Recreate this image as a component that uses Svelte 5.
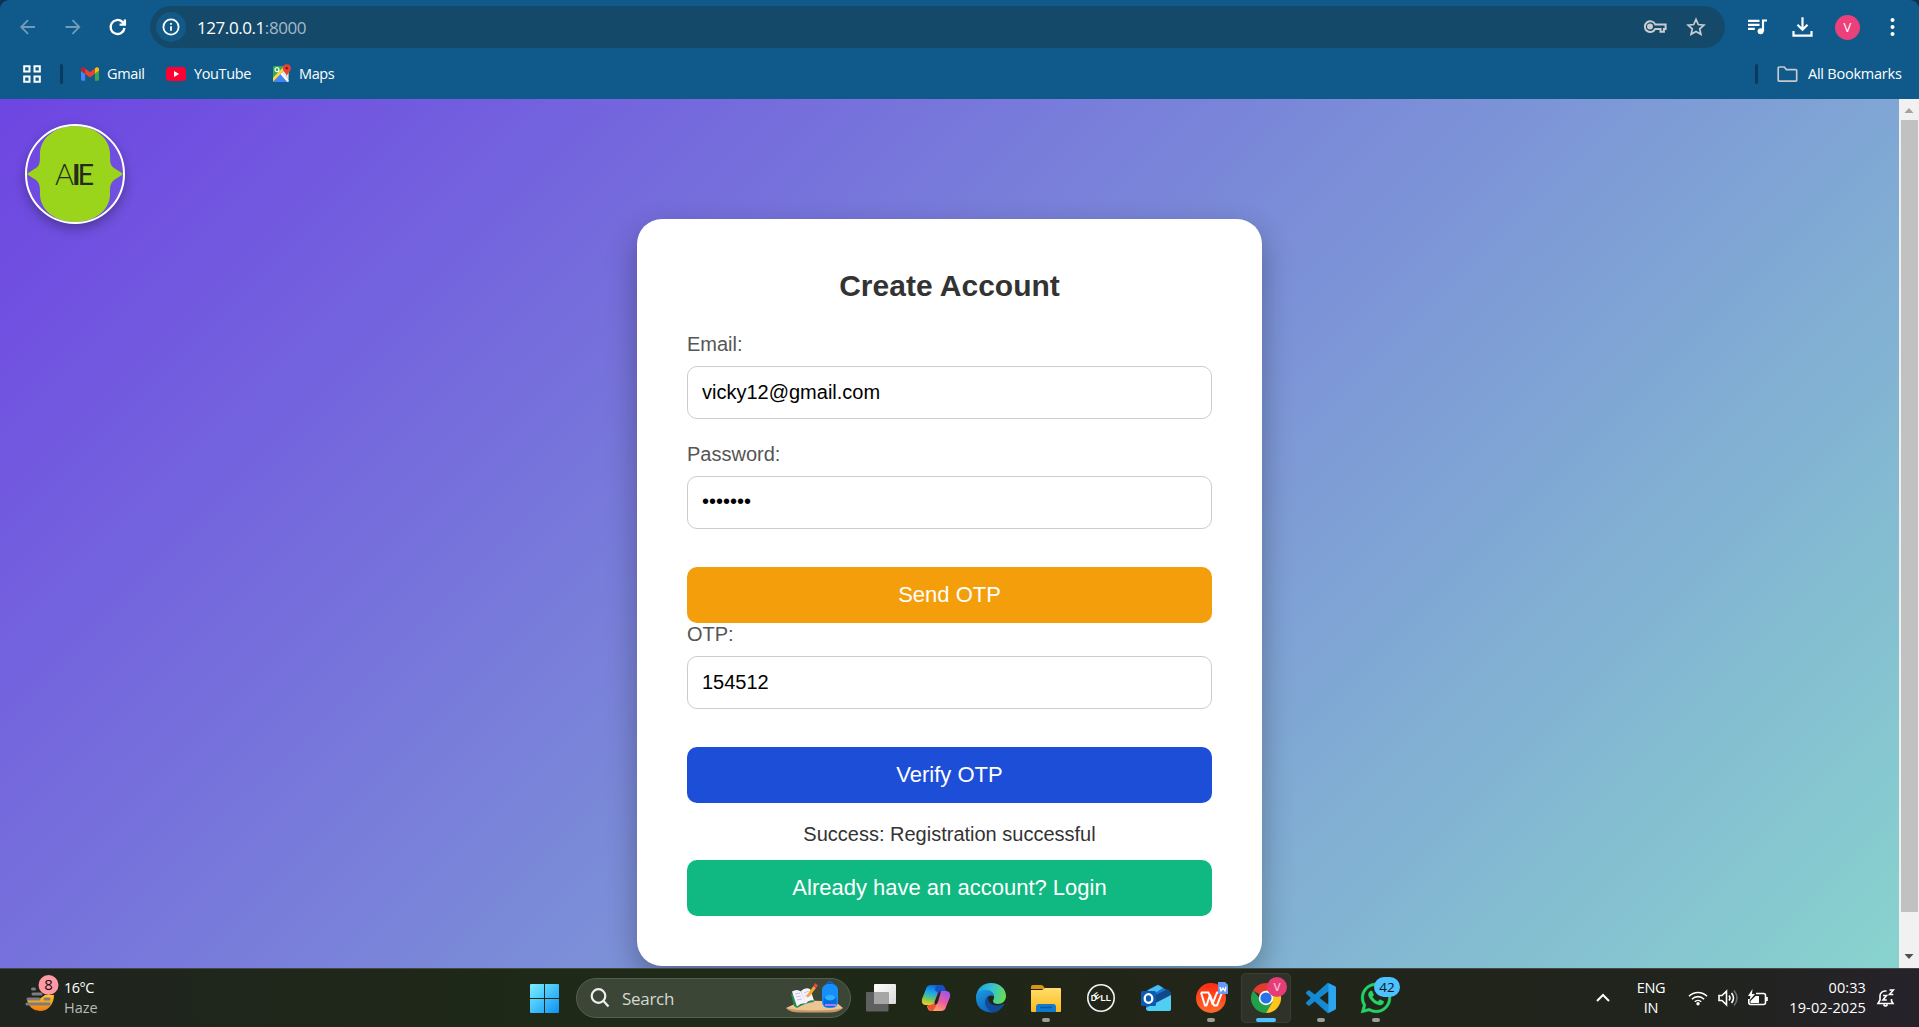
<script>
  let email = $state('vicky12@gmail.com');
  let password = $state('secret7');
  let otp = $state('154512');
</script>

<div class="screen">
  <header class="browser">
    <div class="toolbar">
      <div class="nav">
        <svg class="dim" viewBox="0 0 20 20"><path d="M17 10H3.5M10 3.2 3.2 10l6.8 6.8" /></svg>
        <svg class="dim" viewBox="0 0 20 20"><path d="M2.500 10H16M9.500 3.200l6.800 6.800-6.800 6.800" /></svg>
        <svg class="reload" viewBox="0 0 20 20"><path d="M16.500 11A7 7 0 1 1 14.400 4.900L16.600 7.200M16.900 2.400v5.300H11.600" /></svg>
      </div>
      <div class="omnibox">
        <span class="info">
          <svg viewBox="0 0 18 18"><circle cx="9" cy="9" r="7.6" /><path d="M9 8.2v4.6M9 5v1.8" /></svg>
        </span>
        <span class="url">127.0.0.1<span>:8000</span></span>
        <svg class="key" viewBox="0 0 24 16"><path d="M12.2 5.4h10.4v4.5h-1.7v2.8h-3.4V9.9h-5.3a5.4 5.4 0 1 1 0-4.5z" /><circle cx="7" cy="7.6" r="2" /></svg>
        <svg class="star" viewBox="0 0 20 20"><path d="m10 2.4 2.3 5.1 5.6.6-4.2 3.7 1.2 5.5L10 14.5l-4.9 2.8 1.2-5.5-4.2-3.7 5.6-.6z" /></svg>
      </div>
      <div class="actions">
        <svg viewBox="1 0 24 24"><path d="M3 5.8h11.500M3 9.800h11.500M3 13.800h6.800M18 16.500V5.500h4" /><circle cx="15.600" cy="16.300" r="3" fill="#fff" stroke="none" /></svg>
        <svg viewBox="1 0 24 24"><path d="M12.5 2.3v12M7.5 9.800l5 5 5-5M3.500 16v4.700h18V16" /></svg>
        <span class="avatar">V</span>
        <svg viewBox="0.500 0 24 24"><g fill="#fff" stroke="none"><circle cx="12" cy="5" r="2" /><circle cx="12" cy="12" r="2" /><circle cx="12" cy="19" r="2" /></g></svg>
      </div>
    </div>
    <div class="bookmarks">
      <svg class="grid" viewBox="0 0 18 18"><path d="M1.2 1.2h5.3v5.3H1.2zM11.5 1.2h5.3v5.3h-5.3zM1.2 11.5h5.3v5.3H1.2zM11.5 11.5h5.3v5.3h-5.3z" /></svg>
      <i class="sep"></i>
      <a class="bm gmail" href="#gmail">
        <svg viewBox="52 42 88 66"><path fill="#4285f4" d="M58 108h14V74L52 59v43c0 3.32 2.69 6 6 6" /><path fill="#34a853" d="M120 108h14c3.32 0 6-2.69 6-6V59l-20 15" /><path fill="#fbbc04" d="M120 48v26l20-15v-8c0-7.42-8.47-11.65-14.4-7.2" /><path fill="#ea4335" d="M72 74V48l24 18 24-18v26L96 92" /><path fill="#c5221f" d="M52 51v8l20 15V48l-5.6-4.2c-5.94-4.45-14.4-.22-14.4 7.2" /></svg>
        <span>Gmail</span>
      </a>
      <a class="bm youtube" href="#youtube">
        <svg viewBox="0 0 20 14"><rect width="20" height="14" rx="3.2" fill="#ff0033" /><path d="M8 4v6l5.2-3z" fill="#fff" /></svg>
        <span>YouTube</span>
      </a>
      <a class="bm maps" href="#maps">
        <svg viewBox="0 0 18 19">
          <rect y="2" width="15.5" height="16" rx="1.2" fill="#34a853" />
          <path d="M0 15 8 7l7.5 9.5V18H1z" fill="#4285f4" />
          <path d="m9 9 6.5 6.5V7L12 5z" fill="#e4e6e8" />
          <path d="M0 13.5 10.5 3l2 2L0 17.7z" fill="#fcd34a" />
          <path d="m7.5 10.2 1.7-1.6 6.5 7.4-.4 2h-1z" fill="#fff" />
          <circle cx="4" cy="5.7" r="2" fill="none" stroke="#fff" stroke-width="1.2" />
          <path d="M13.8 12.5c0-3-4-4.500-4-8.200a4 4 0 0 1 8 0c0 3.700-4 5.200-4 8.200" fill="#ea4335" /><circle cx="13.800" cy="4.200" r="1.400" fill="#8d1f17" />
        </svg>
        <span>Maps</span>
      </a>
      <i class="sep last"></i>
      <a class="bm all" href="#all">
        <svg viewBox="0 0 21 16"><path d="M1.200 14.300V2a1 1 0 0 1 1-1h5l2.200 2.600h9.300a1 1 0 0 1 1 1v9.700a.8.800 0 0 1-.8.800H2a.8.800 0 0 1-.8-.8z" fill="none" stroke="#c7c9cb" stroke-width="1.700" /></svg>
        <span>All Bookmarks</span>
      </a>
    </div>
  </header>

  <div class="viewport">
    <main class="page">
      <svg class="logo" viewBox="0 0 100 100">
        <path d="M50 2c20 0 34.500 12 35 27 .2 8-.5 12 4 15 4 2.500 6.500 4 9 6-2.500 2-5 3.500-9 6-4.500 4-4 8-4 15-.5 15-15 27-35 27S15.500 86 15 71c0-7 .5-11-4-15-4-2.500-6.500-4-9-6 2.500-2 5-3.500 9-6 4.500-3 3.800-7 4-15C15.500 14 30 2 50 2" fill="#9ad51b" />
        <circle cx="50" cy="50" r="49" fill="none" stroke="#fff" stroke-width="2" />
        <text y="61" fill="#252b20"><tspan x="30" class="thin">A</tspan><tspan x="47" class="thick">I</tspan><tspan x="52.500" class="mid">E</tspan></text>
      </svg>
      <form class="card" onsubmit={(e) => e.preventDefault()}>
        <h2>Create Account</h2>
        <label for="email">Email:</label>
        <input id="email" type="text" bind:value={email} />
        <label class="spaced" for="password">Password:</label>
        <input id="password" type="password" bind:value={password} />
        <button class="send" type="button">Send OTP</button>
        <label for="otp">OTP:</label>
        <input id="otp" type="text" bind:value={otp} />
        <button class="verify" type="submit">Verify OTP</button>
        <p>Success: Registration successful</p>
        <button class="login" type="button">Already have an account? Login</button>
      </form>
    </main>
    <div class="scrollbar">
      <svg viewBox="0 0 20 21"><path d="m5.500 14 4.500-5 4.500 5z" fill="#a3a3a3" /></svg>
      <div class="thumb"></div>
      <svg class="down" viewBox="0 0 20 21"><path d="m5.500 7 4.500 5 4.500-5z" fill="#505050" /></svg>
    </div>
  </div>

  <footer class="taskbar">
    <div class="weather">
      <svg viewBox="0 0 34 38">
        <defs><linearGradient id="sun" x2="0" y2="1"><stop offset="0" stop-color="#ffc328" /><stop offset="1" stop-color="#f07d12" /></linearGradient></defs>
        <path d="M2 25h11l7-5h9q0 7-4 11.500-4 4.500-10 4.500-10 0-13-11" fill="url(#sun)" />
        <path d="M7.500 14h2M8 19h8M3 24h11M20 24h4M2 29h22" stroke="#7c7d80" stroke-width="3" stroke-linecap="round" />
        <circle cx="23.500" cy="10" r="10" fill="#ff99a4" /><text x="23.500" y="15.300" text-anchor="middle" font-size="15" fill="#111">8</text>
      </svg>
      <div class="temp"><span>16°C</span><span class="haze">Haze</span></div>
    </div>

    <div class="center">
      <svg class="start" viewBox="0 0 29 29">
        <defs><linearGradient id="win" x2="1" y2="1"><stop offset="0" stop-color="#7deeff" /><stop offset=".5" stop-color="#43c1fb" /><stop offset="1" stop-color="#0c91f4" /></linearGradient></defs>
        <path d="M0 1q0-1 1-1h13v14H0zM15 0h13q1 0 1 1v13H15zM0 15h14v14H1q-1 0-1-1zM15 15h14v13q0 1-1 1H15z" fill="url(#win)" />
      </svg>
      <div class="search">
        <svg class="lens" viewBox="0 0 20 20"><circle cx="8.500" cy="8" r="6.800" /><path d="m13.500 13 5 5.500" /></svg>
        <span>Search</span>
        <svg class="school" viewBox="0 0 58 34">
          <path d="M1 27 14 21q20-3 38 1l6 5q-5 4-14 4H15q-10 0-14-4" fill="#ecc594" />
          <path d="M1 27q8 2.500 28 2.500T58 27q-5 4.500-14 4.500H15Q5 31.500 1 27" fill="#c99564" />
          <path d="m6 13 20-5 3 13q-9 1-17 6l-3-2z" fill="#258d46" />
          <path d="M7 10.500q5-3 9 0l5 12q-5-1-9 3zM16 10q4-4 9-2l4 11.500q-5-1-8 3z" fill="#f7f2ff" />
          <path d="m10 13 5-1M11 16l5-1M12 19l5-1M19 12l5-2M20 15l5-2" stroke="#cdbfe6" />
          <path d="m22 14 6.500-9 2.500 2-6.500 8.500-3 1z" fill="#f5a52b" /><path d="m28.500 5 1.500-3 3 2.500-2 2.500z" fill="#ef4055" />
          <path d="M41.500 4q3.500-6 7 0" fill="none" stroke="#1261cd" stroke-width="1.800" />
          <rect x="37" y="3" width="16" height="24" rx="6" fill="#1590fb" /><rect x="38.500" y="15" width="13" height="11" rx="4" fill="#0868e0" /><path d="M39.500 17q5.500 5 11 0-1-3-5.500-3t-5.500 3" fill="#2fb0ff" /><path d="M40 24h11" stroke="#a77cf5" stroke-width="2" />
        </svg>
      </div>
      <div class="apps">
        <svg viewBox="0 0 50 50">
          <defs><linearGradient id="tv" x2="1" y2="1"><stop offset="0" stop-color="#fff" /><stop offset="1" stop-color="#d9d9d9" /></linearGradient></defs>
          <rect x="18" y="11" width="22" height="20" rx="1" fill="url(#tv)" /><rect x="10" y="19" width="22.500" height="19.500" rx="1" fill="#606060" /><path d="M18 19h14.500v12H18z" fill="#a6a6a6" />
        </svg>
        <svg viewBox="0 0 50 50">
          <defs>
            <linearGradient id="cpA" x1=".6" x2=".3" y2="1"><stop offset="0" stop-color="#155bd7" /><stop offset=".4" stop-color="#17a8ef" /><stop offset=".7" stop-color="#64c56a" /><stop offset="1" stop-color="#f4cb20" /></linearGradient>
            <linearGradient id="cpB" x1=".8" x2=".3" y2="1"><stop offset="0" stop-color="#9c55f0" /><stop offset=".5" stop-color="#ec5c9d" /><stop offset="1" stop-color="#ffab5e" /></linearGradient>
          </defs>
          <path d="M20 12h10q3 0 4 4l1 2h-4q-3 0-4 3l-3 9q-1 2-4 2h-5q-5 0-4-6l4-10q1-4 5-4" fill="url(#cpA)" />
          <path d="M27 12h4q3 1 3 6h-3q-3 0-4 2l-3-3q0-4 3-5" fill="#1550c4" />
          <path d="M30 38H20q-3 0-4-5l3-.5q3 0 4-3l3-9q1-2.500 5-2.500h4q5 0 4 6l-4 10q-1 4-5 4" fill="url(#cpB)" />
          <path d="M22 38h-2q-3-1-3.500-6h3q3 0 3.500-2l2 3z" fill="#f04f38" /><path d="M23.500 29 27 20q1-2 3-2l-3 11q-1 3-3 3z" fill="#1f261b" />
        </svg>
        <svg viewBox="0 0 50 50">
          <defs>
            <linearGradient id="edA" x1="0" x2="1" y1=".3" y2=".5"><stop offset="0" stop-color="#1b9de0" /><stop offset=".5" stop-color="#35c2d0" /><stop offset="1" stop-color="#65df55" /></linearGradient>
            <linearGradient id="edB" x2=".6" y2="1"><stop offset="0" stop-color="#1d9be2" /><stop offset="1" stop-color="#0f62bd" /></linearGradient>
          </defs>
          <path d="M10 24C11 15 17 10 25 10c9 0 15 6 15 13 0 5-4 8-8 8-3 0-5-1-5-3 0-1 1-1 1-4 0-4-4-6-8-6-6 0-10 4-10 6" fill="url(#edA)" />
          <path d="M10 24c0-4 4-7 10-7 5 0 8 3 8 6-5-2-8 2-8 6 0 6 5 11 10 10-3 1-20 2-20-15" fill="url(#edB)" />
          <path d="M24 22c-3 1-5 4-5 7 0 6 6 11 11 10 3-1 6-4 8-7 1-1 0-1.500-1-1-2 1-4 1.500-6 1.500-6 0-9-4-9-7 0-2 1-3 2-3.500" fill="#114a96" />
        </svg>
        <svg viewBox="0 0 50 50">
          <defs><linearGradient id="fold" x2="0" y2="1"><stop offset="0" stop-color="#ffde6b" /><stop offset="1" stop-color="#fcb91d" /></linearGradient></defs>
          <path d="M10 14q0-2 2-2h8q2 0 3 2l1 2h-14z" fill="#dc9414" /><path d="M10 17h11l3-2h15q1 0 1 1v22q0 1-1 1H11q-1 0-1-1z" fill="url(#fold)" />
          <path d="M15 39v-5q0-3 3-3h14q3 0 3 3v5z" fill="#0f79cf" /><path d="M19 34.500h12" stroke="#07569e" stroke-width="1.500" />
          <rect x="21" y="45" width="8" height="4" rx="2" fill="#9b9d96" />
        </svg>
        <svg viewBox="0 0 50 50">
          <circle cx="25" cy="25" r="13.200" fill="none" stroke="#f4f4f4" stroke-width="1.600" />
          <text class="dell" y="28.200"><tspan x="14.800">D</tspan><tspan x="24.500">L</tspan><tspan x="29.700">L</tspan></text>
          <text class="dell" transform="translate(20.600 26.800) rotate(-38)">E</text>
        </svg>
        <svg viewBox="0 0 50 50">
          <path d="m15 18 11-6q1-.5 2 0l12 8v16q0 2-2 2H18q-3 0-3-3z" fill="#1477cb" /><path d="m17 17 10-5 5 3-13 8z" fill="#4abdf0" /><path d="m20 24 17-8 3 4v5L25 35z" fill="#13488f" /><path d="m15 35 25-13v14q0 2-2 2H18q-3 0-3-3" fill="#50cff5" />
          <rect x="10" y="18" width="15" height="15" rx="1.500" fill="#0c5ab3" /><ellipse cx="17.500" cy="25.500" rx="3.800" ry="4.400" fill="none" stroke="#fff" stroke-width="2.300" />
        </svg>
        <svg viewBox="0 0 50 50">
          <defs><linearGradient id="wps" x2="0" y2="1"><stop offset="0" stop-color="#ff2a13" /><stop offset="1" stop-color="#ff6a2a" /></linearGradient></defs>
          <circle cx="25" cy="25" r="15" fill="url(#wps)" /><path d="M15 19.500h7.500l4 11.500 4.500-11.500h5L31 32.500h-3L24 22l-3.500 10.500h-1.500L15 19.500" fill="none" stroke="#fff" stroke-width="2" stroke-linejoin="round" />
          <path d="M32 9h7l3 3v9H32z" fill="#6699f8" /><path d="m34 14 1 4 2-3 2 3 1-4" fill="none" stroke="#fff" stroke-width="1.300" />
          <rect x="21" y="45" width="8" height="4" rx="2" fill="#9b9d96" />
        </svg>
        <svg class="active" viewBox="0 0 50 50">
          <path d="M25 25 12 17.500A15 15 0 0 1 38 17.500z" fill="#e33b2e" /><path d="M25 25h-6.500L12 17.500a15 15 0 0 0 13 22.500l6.500-11z" fill="#22a14a" /><path d="M25 17.500h13A15 15 0 0 1 25 40l6.500-11z" fill="#fdc61a" />
          <circle cx="25" cy="25" r="7.200" fill="#fff" /><circle cx="25" cy="25" r="5.600" fill="#2872e8" />
          <circle cx="36" cy="14" r="10" fill="#e63d78" /><text x="36" y="18" text-anchor="middle" font-size="11.500" fill="#f6bcd2" font-weight="600">V</text>
          <rect x="15" y="45" width="20" height="4" rx="2" fill="#4cc2ff" />
        </svg>
        <svg viewBox="0 0 50 50">
          <g transform="translate(10 10) scale(1.250)">
            <path fill="#1589d2" d="M23.150 2.587L18.210.21a1.494 1.494 0 0 0-1.705.29l-9.460 8.630-4.120-3.128a.999.999 0 0 0-1.276.057L.327 7.261A1 1 0 0 0 .326 8.740L3.899 12 .326 15.260a1 1 0 0 0 .001 1.479L1.650 17.940a.999.999 0 0 0 1.276.057l4.120-3.128 9.460 8.630a1.492 1.492 0 0 0 1.704.29l4.942-2.377A1.500 1.500 0 0 0 24 20.060V3.939a1.500 1.500 0 0 0-.85-1.352zm-5.146 14.861L10.826 12l7.178-5.448v10.896z" />
            <path fill="#2aa5ef" d="M18 .1 23.150 2.587A1.500 1.500 0 0 1 24 3.939V20.060a1.500 1.500 0 0 1-.85 1.352L18 23.900z" />
          </g>
          <rect x="21" y="45" width="8" height="4" rx="2" fill="#9b9d96" />
        </svg>
        <svg viewBox="0 0 50 50">
          <path transform="translate(10 10) scale(1.250)" fill="#25d366" stroke="#25d366" stroke-width=".4" d="M17.472 14.382c-.297-.149-1.758-.867-2.030-.967-.273-.099-.471-.148-.67.150-.197.297-.767.966-.94 1.164-.173.199-.347.223-.644.075-.297-.150-1.255-.463-2.390-1.475-.883-.788-1.480-1.761-1.653-2.059-.173-.297-.018-.458.130-.606.134-.133.298-.347.446-.520.149-.174.198-.298.298-.497.099-.198.050-.371-.025-.520-.075-.149-.669-1.612-.916-2.207-.242-.579-.487-.5-.669-.510-.173-.008-.371-.010-.570-.010-.198 0-.520.074-.792.372-.272.297-1.040 1.016-1.040 2.479 0 1.462 1.065 2.875 1.213 3.074.149.198 2.096 3.200 5.077 4.487.709.306 1.262.489 1.694.625.712.227 1.360.195 1.871.118.571-.085 1.758-.719 2.006-1.413.248-.694.248-1.289.173-1.413-.074-.124-.272-.198-.570-.347m-5.421 7.403h-.004a9.870 9.870 0 0 1-5.031-1.378l-.361-.214-3.741.982.998-3.648-.235-.374a9.860 9.860 0 0 1-1.510-5.260c.001-5.450 4.436-9.884 9.888-9.884 2.640 0 5.122 1.030 6.988 2.898a9.825 9.825 0 0 1 2.893 6.994c-.003 5.450-4.437 9.884-9.885 9.884m8.413-18.297A11.815 11.815 0 0 0 12.050 0C5.495 0 .160 5.335.157 11.892c0 2.096.547 4.142 1.588 5.945L.057 24l6.305-1.654a11.882 11.882 0 0 0 5.683 1.448h.005c6.554 0 11.890-5.335 11.893-11.893a11.821 11.821 0 0 0-3.480-8.413z" />
          <rect x="23" y="4" width="26" height="20" rx="10" fill="#4cc2ff" /><text x="36" y="19" text-anchor="middle" font-size="13.500" fill="#0b1520">42</text>
          <rect x="21" y="45" width="8" height="4" rx="2" fill="#9b9d96" />
        </svg>
      </div>
    </div>

    <div class="tray">
      <svg class="chevron" viewBox="0 0 14 10"><path d="M1 8l6-6 6 6" /></svg>
      <div class="lang"><span>ENG</span><span>IN</span></div>
      <svg class="wifi" viewBox="0 0 20 16"><path d="M1 6.200a12.700 12.700 0 0 1 18 0M3.900 9.200a8.600 8.600 0 0 1 12.200 0M6.800 11.800a4.600 4.600 0 0 1 6.400 0" /><circle cx="10" cy="13.800" r="1.700" fill="#fff" stroke="none" /></svg>
      <svg class="sound" viewBox="0 0 20 18"><path d="M1 6.500h3l4.500-4.300v13.600L4 11.500H1zM11 6.500q2 2.500 0 5M13.500 4q4 5 0 10" /><path d="M16 1.500q6 7.500 0 15" opacity=".35" /></svg>
      <svg class="battery" viewBox="0 0 20 17"><path d="M8 3.500h7.500a2 2 0 0 1 2 2v7a2 2 0 0 1-2 2H2.800a2 2 0 0 1-2-2V9" /><path d="M7.500 6H11v7H2.500v-2zM4.500-1 0 6h2.500l-1 4.500L7 4H4zM18 7h1.800v4H18z" fill="#fff" stroke="none" /></svg>
      <div class="clock"><span>00:33</span><span>19-02-2025</span></div>
      <svg class="bell" viewBox="0 0 18 20"><path d="M9.500 3H8a5 5 0 0 0-5 5V12l-2 3.500h15L14.500 13v-2M6.500 16.500q2 3 4 0M6 7.500h3.500l-3.500 4.500h3.800M12.500 2h3.800l-3.800 4.500h3.800" /></svg>
    </div>
  </footer>
</div>

<style>
  :global(body) { background: #0a3552; overflow: hidden; }
  .screen { width: 1919px; height: 1027px; display: flex; flex-direction: column; font-family: "Open Sans", "Noto Sans", sans-serif; color: #fff; }
  svg { display: block; flex: none; overflow: visible; }

  .browser { height: 99px; flex: none; background: #105a8b; border-radius: 9px 9px 0 0; }
  .toolbar { height: 42px; padding: 6px 4px 0 5px; display: flex; align-items: center; }
  .toolbar svg { fill: none; stroke: #fff; stroke-width: 2; }
  .nav { display: flex; width: 135px; margin-right: 10px; }
  .nav svg { width: 20px; height: 20px; margin: 0 12.5px; }
  .nav svg.dim { stroke: #6f9cb9; stroke-width: 1.8; }
  .nav svg.reload { stroke-width: 2.3; }
  .omnibox { width: 1575px; height: 42px; box-sizing: border-box; border-radius: 21px; background: #14496a; display: flex; align-items: center; padding: 0 19px 0 6px; }
  .info { width: 30px; height: 30px; border-radius: 50%; background: #115a88; display: grid; place-items: center; margin-right: 11px; }
  .info svg { width: 18px; height: 18px; stroke-width: 1.8; }
  .url { flex: 1; font-size: 17px; letter-spacing: -0.43px; }
  .url span { color: #a3b9c8; }
  .toolbar .key { width: 24px; height: 16px; stroke: #c9ccce; margin-right: 19px; }
  .toolbar .key circle { fill: #c9ccce; }
  .toolbar .star { width: 20px; height: 20px; stroke: #c9ccce; stroke-width: 1.7; }
  .actions { display: flex; align-items: center; margin-left: 10px; }
  .actions svg { width: 24px; height: 24px; margin: 0 10.5px; stroke-width: 2.2; }
  .avatar { width: 25px; height: 25px; margin: 0 10px; border-radius: 50%; background: #ec407a; font-size: 13px; line-height: 25px; text-align: center; }

  .bookmarks { height: 51px; display: flex; align-items: center; padding: 0 17px 0 23px; font-size: 14.5px; }
  .grid { width: 18px; height: 18px; fill: none; stroke: #fff; stroke-width: 2; }
  .sep { width: 3px; height: 20px; border-radius: 2px; background: #0a3b5e; margin: 0 18px 0 19px; }
  .bm { display: flex; align-items: center; color: #fff; text-decoration: none; white-space: nowrap; }
  .gmail { width: 85px; }
  .gmail svg { width: 18px; height: 14px; margin-right: 8px; }
  .youtube { width: 107px; }
  .youtube svg { width: 20px; height: 14px; margin-right: 8px; }
  .maps svg { width: 18px; height: 19px; margin-right: 8px; }
  .sep.last { margin-left: auto; margin-right: 19px; }
  .all svg { width: 21px; height: 16px; margin-right: 10px; }
  .bm span { letter-spacing: -0.38px; }
  .all span { letter-spacing: -0.23px; width: 94px; }

  .viewport { height: 869px; flex: none; display: flex; overflow: hidden; }
  .page { width: 1899px; position: relative; background: linear-gradient(135deg, #6e45e2, #88d3ce); display: flex; justify-content: center; align-items: flex-start; padding-top: 120px; box-sizing: border-box; font-family: "Liberation Sans", Arial, sans-serif; }
  .logo { position: absolute; left: 25px; top: 25px; width: 100px; height: 100px; border-radius: 50%; box-shadow: 0 5px 12px rgba(0, 0, 0, 0.3); }
  .logo text { font-family: Lato, sans-serif; font-size: 29px; }
  .thin { font-weight: 300; }
  .mid { font-weight: 400; }
  .thick { font-weight: 700; }
  .card { width: 625px; height: 747px; box-sizing: border-box; padding: 50px; border-radius: 25px; background: #fff; box-shadow: 0 12px 31px rgba(0, 0, 0, 0.3); font-size: 20px; color: #333; }
  h2 { margin: 0 0 30px; height: 34px; line-height: 34px; font-size: 30px; text-align: center; }
  label { display: block; height: 23px; line-height: 23px; margin-bottom: 10px; color: #555; }
  label.spaced { margin-top: 24px; }
  input { display: block; width: 525px; height: 53px; box-sizing: border-box; border: 1px solid #ccc; border-radius: 10px; padding: 0 14px; font: 20px "Liberation Sans", Arial, sans-serif; color: #000; background: #fff; outline: none; }
  #password { padding-bottom: 2px; }
  button { display: block; width: 525px; height: 56px; border: 0; padding: 0; border-radius: 10px; font: 22px "Liberation Sans", Arial, sans-serif; color: #fff; }
  .send { margin-top: 38px; background: #f59e0b; }
  .verify { margin-top: 38px; background: #1d4ed8; }
  .login { background: #10b981; }
  p { margin: 20px 0 14px; height: 23px; line-height: 23px; text-align: center; }
  .scrollbar { width: 20px; background: #f1f1f1; display: flex; flex-direction: column; }
  .scrollbar svg { width: 20px; height: 21px; }
  .thumb { height: 792px; margin: 0 1px 0 2px; background: #c1c1c1; }
  .scrollbar .down { margin-top: auto; }

  .taskbar { height: 59px; flex: none; box-sizing: border-box; border-top: 1px solid #454740; display: flex; background: linear-gradient(90deg, #20241f, #1e2917 28%, #1e2917 42%, #222518 60%, #20241d 88%, #26222a); }
  .weather { display: flex; width: 530px; padding-left: 25px; box-sizing: border-box; }
  .weather svg { width: 34px; height: 38px; margin-top: 6px; }
  .temp { display: flex; flex-direction: column; margin: 9px 0 0 5px; font-size: 14.5px; line-height: 20px; letter-spacing: -0.5px; }
  .haze { color: #b9bbb8; letter-spacing: 0; }
  .center { display: flex; align-items: center; width: 1066px; }
  .start { width: 29px; height: 29px; }
  .search { width: 275px; height: 40px; box-sizing: border-box; margin-left: 17px; border: 1px solid #566050; border-radius: 20px; background: #3c4636; display: flex; align-items: center; padding: 0 7px 0 13px; font-size: 17px; letter-spacing: -0.3px; color: #d5d8d3; }
  .search span { flex: 1; margin-left: 12px; }
  .lens { width: 20px; height: 20px; fill: none; stroke: #eee; stroke-width: 2.2; }
  .school { width: 58px; height: 34px; }
  .apps { display: flex; gap: 5px; margin-left: 5px; }
  .apps svg { width: 50px; height: 50px; }
  .apps .active { background: #2e3228; border-radius: 5px; box-shadow: inset 0 0 0 1px #393d33; }
  .dell { font: 700 8.5px "Liberation Sans", Arial, sans-serif; fill: #fff; }
  .tray { display: flex; align-items: center; flex: 1; }
  .tray svg { fill: none; stroke: #fff; stroke-width: 1.6; }
  .chevron { width: 14px; height: 10px; }
  .tray .chevron { stroke-width: 2; }
  .lang, .clock { display: flex; flex-direction: column; font-size: 14.5px; line-height: 20px; }
  .lang { width: 50px; margin-left: 16px; text-align: center; letter-spacing: -0.3px; }
  .wifi { width: 20px; height: 16px; margin-left: 12px; }
  .sound { width: 20px; height: 18px; margin-left: 10px; }
  .battery { width: 20px; height: 17px; margin-left: 10px; }
  .clock { width: 90px; margin-left: 8px; text-align: right; letter-spacing: 0.1px; }
  .bell { width: 18px; height: 20px; margin-left: 11px; }
</style>
